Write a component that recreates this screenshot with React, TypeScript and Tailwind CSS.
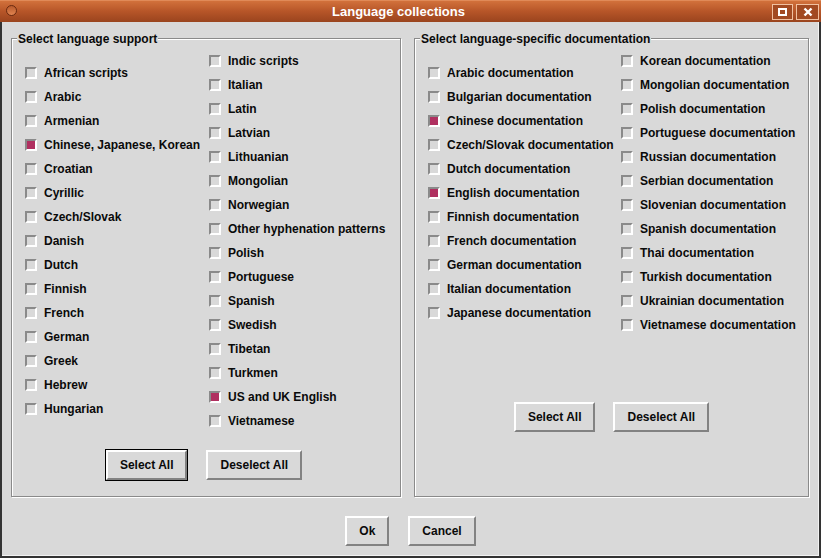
import React from "react";

const FONT = { fontFamily: '"Liberation Sans", Arial, Helvetica, sans-serif' };

type Item = [string, boolean];

const left1: Item[] = [
  ["African scripts", false],
  ["Arabic", false],
  ["Armenian", false],
  ["Chinese, Japanese, Korean", true],
  ["Croatian", false],
  ["Cyrillic", false],
  ["Czech/Slovak", false],
  ["Danish", false],
  ["Dutch", false],
  ["Finnish", false],
  ["French", false],
  ["German", false],
  ["Greek", false],
  ["Hebrew", false],
  ["Hungarian", false],
];
const left2: Item[] = [
  ["Indic scripts", false],
  ["Italian", false],
  ["Latin", false],
  ["Latvian", false],
  ["Lithuanian", false],
  ["Mongolian", false],
  ["Norwegian", false],
  ["Other hyphenation patterns", false],
  ["Polish", false],
  ["Portuguese", false],
  ["Spanish", false],
  ["Swedish", false],
  ["Tibetan", false],
  ["Turkmen", false],
  ["US and UK English", true],
  ["Vietnamese", false],
];
const right1: Item[] = [
  ["Arabic documentation", false],
  ["Bulgarian documentation", false],
  ["Chinese documentation", true],
  ["Czech/Slovak documentation", false],
  ["Dutch documentation", false],
  ["English documentation", true],
  ["Finnish documentation", false],
  ["French documentation", false],
  ["German documentation", false],
  ["Italian documentation", false],
  ["Japanese documentation", false],
];
const right2: Item[] = [
  ["Korean documentation", false],
  ["Mongolian documentation", false],
  ["Polish documentation", false],
  ["Portuguese documentation", false],
  ["Russian documentation", false],
  ["Serbian documentation", false],
  ["Slovenian documentation", false],
  ["Spanish documentation", false],
  ["Thai documentation", false],
  ["Turkish documentation", false],
  ["Ukrainian documentation", false],
  ["Vietnamese documentation", false],
];

function Check({ label, on }: { label: string; on: boolean }) {
  return (
    <div className="h-[24px] flex items-center gap-[7px] whitespace-nowrap">
      <span
        className={
          "w-[12px] h-[12px] border-2 border-t-[#8a8a8a] border-l-[#8a8a8a] border-b-white border-r-white " +
          (on ? "bg-[#b03060]" : "bg-[#d9d9d9]")
        }
      />
      <span className="text-[12px] font-bold text-[#0a0a0a] leading-none">{label}</span>
    </div>
  );
}

function Btn({ label, focus }: { label: string; focus?: boolean }) {
  return (
    <div className={focus ? "outline outline-1 outline-black" : ""}>
      <div className="h-[30px] px-[12px] flex items-center border-2 border-t-white border-l-white border-b-[#828282] border-r-[#828282] bg-[#d9d9d9] text-[12px] font-bold text-[#0a0a0a] whitespace-nowrap">
        {label}
      </div>
    </div>
  );
}

function Group({
  title,
  className,
  children,
}: {
  title: string;
  className: string;
  children: React.ReactNode;
}) {
  return (
    <div
      className={
        "relative border border-[#8a8a8a] shadow-[inset_1px_1px_0_#ffffff,1px_1px_0_#ffffff] " + className
      }
    >
      <div className="absolute left-[5px] top-[-7px] bg-[#d9d9d9] px-[1px] text-[12px] font-bold text-[#0a0a0a] leading-[14px] whitespace-nowrap">
        {title}
      </div>
      {children}
    </div>
  );
}

export default function App() {
  return (
    <div className="w-[821px] h-[558px] flex flex-col bg-[#d9d9d9]" style={FONT}>
      {/* Title bar */}
      <div className="h-[22px] relative flex items-center justify-center bg-[linear-gradient(#d2713b,#b65528_50%,#9a441e)] border-t border-t-[#e08a58]">
        <div className="absolute left-[6px] top-[4px] w-[11px] h-[11px] rounded-full border border-[#6a2a10] bg-[linear-gradient(#b85a2c,#e08450)]" />
        <span className="text-white text-[13px] font-bold pr-[24px]">Language collections</span>
        <div className="absolute right-[2px] top-[3px] flex gap-[3px]">
          <div className="w-[21px] h-[16px] border border-[#f0c0a0] bg-[#a24a22] flex items-center justify-center">
            <div className="w-[9px] h-[8px] border-2 border-white" />
          </div>
          <div className="w-[23px] h-[16px] border border-[#f0c0a0] bg-[#a24a22] flex items-center justify-center">
            <svg width="10" height="10" viewBox="0 0 10 10">
              <path d="M1.5 1.5 L8.5 8.5 M8.5 1.5 L1.5 8.5" stroke="white" strokeWidth="2.4" />
            </svg>
          </div>
        </div>
      </div>
      {/* Body */}
      <div className="flex-1 flex flex-col border-l-2 border-l-[#333] border-r-2 border-r-[#333] border-b-2 border-b-[#333] shadow-[inset_-1px_-1px_0_#f2f2f2]">
        <div className="flex pl-[9px] pt-[16px] gap-[13px]">
          <Group title="Select language support" className="w-[390px] h-[459px] flex flex-col items-center">
            <div className="self-stretch flex items-center pl-[13px] pt-[10px]">
              <div className="w-[184px] flex flex-col">
                {left1.map(([l, c]) => (
                  <Check key={l} label={l} on={c} />
                ))}
              </div>
              <div className="flex flex-col">
                {left2.map(([l, c]) => (
                  <Check key={l} label={l} on={c} />
                ))}
              </div>
            </div>
            <div className="flex gap-[19px] mt-[17px] mr-[4px]">
              <Btn label="Select All" focus />
              <Btn label="Deselect All" />
            </div>
          </Group>
          <Group title="Select language-specific documentation" className="w-[395px] h-[459px] flex flex-col items-center">
            <div className="self-stretch flex items-center pl-[13px] pt-[10px]">
              <div className="w-[193px] flex flex-col">
                {right1.map(([l, c]) => (
                  <Check key={l} label={l} on={c} />
                ))}
              </div>
              <div className="flex flex-col">
                {right2.map(([l, c]) => (
                  <Check key={l} label={l} on={c} />
                ))}
              </div>
            </div>
            <div className="flex gap-[18px] mt-[65px]">
              <Btn label="Select All" />
              <Btn label="Deselect All" />
            </div>
          </Group>
        </div>
        <div className="flex justify-center gap-[19px] mt-[19px]">
          <Btn label="Ok" />
          <Btn label="Cancel" />
        </div>
      </div>
    </div>
  );
}
